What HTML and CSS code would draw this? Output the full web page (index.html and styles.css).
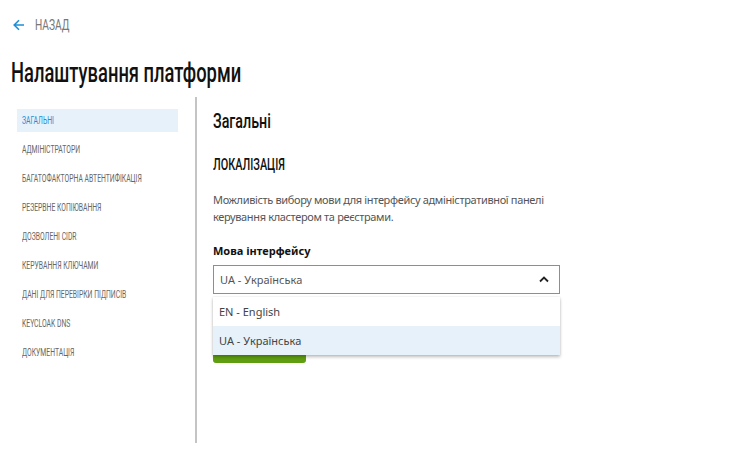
FILE: index.html
```html
<!DOCTYPE html>
<html lang="uk">
<head>
<meta charset="utf-8">
<title>Налаштування платформи</title>
<link rel="stylesheet" href="styles.css">
</head>
<body>
<header class="header">
  <a class="back" href="#">
    <svg class="back-icon" width="12" height="12" viewBox="0 0 12 12"><path d="M11 6H1.5M6 1.2L1.2 6 6 10.8" fill="none" stroke="#1d8fd6" stroke-width="1.6"/></svg>
    <span class="narrow">НАЗАД</span>
  </a>
  <h1 class="title"><span class="narrow">Налаштування платформи</span></h1>
</header>
<div class="main">
  <nav class="sidebar">
    <a class="nav-item active" href="#"><span class="narrow">ЗАГАЛЬНІ</span></a>
    <a class="nav-item" href="#"><span class="narrow">АДМІНІСТРАТОРИ</span></a>
    <a class="nav-item" href="#"><span class="narrow">БАГАТОФАКТОРНА АВТЕНТИФІКАЦІЯ</span></a>
    <a class="nav-item" href="#"><span class="narrow">РЕЗЕРВНЕ КОПІЮВАННЯ</span></a>
    <a class="nav-item" href="#"><span class="narrow">ДОЗВОЛЕНІ CIDR</span></a>
    <a class="nav-item" href="#"><span class="narrow">КЕРУВАННЯ КЛЮЧАМИ</span></a>
    <a class="nav-item" href="#"><span class="narrow">ДАНІ ДЛЯ ПЕРЕВІРКИ ПІДПИСІВ</span></a>
    <a class="nav-item" href="#"><span class="narrow">KEYCLOAK DNS</span></a>
    <a class="nav-item" href="#"><span class="narrow">ДОКУМЕНТАЦІЯ</span></a>
  </nav>
  <section class="content">
    <h2 class="section-title"><span class="narrow">Загальні</span></h2>
    <h3 class="subsection-title"><span class="narrow">ЛОКАЛІЗАЦІЯ</span></h3>
    <p class="description">Можливість вибору мови для інтерфейсу адміністративної панелі керування кластером та реєстрами.</p>
    <label class="field-label">Мова інтерфейсу</label>
    <div class="select-wrap">
      <div class="select">
        <span>UA - Українська</span>
        <svg width="10" height="7" viewBox="0 0 10 7"><path d="M1 5.5L5 1.5 9 5.5" fill="none" stroke="#222" stroke-width="1.8"/></svg>
      </div>
      <ul class="menu">
        <li class="option">EN - English</li>
        <li class="option selected">UA - Українська</li>
      </ul>
    </div>
    <button class="btn">Застосувати</button>
  </section>
</div>
</body>
</html>
```
FILE: styles.css
```css
* { box-sizing: border-box; }
body {
  margin: 0;
  background: #fff;
  font-family: "Noto Sans", "Open Sans", sans-serif;
  color: #222;
}
.narrow {
  display: inline-block;
  white-space: nowrap;
  transform: scaleX(0.68);
  transform-origin: left center;
}
.back, .title, .nav-item, .section-title, .subsection-title {
  font-family: "Roboto", "Noto Sans", sans-serif;
}
.header {
  padding: 18px 11px 0;
}
.back {
  display: flex;
  align-items: center;
  gap: 10px;
  padding-left: 2px;
  text-decoration: none;
  color: #777;
  font-size: 15px;
  height: 14px;
}
.title {
  margin: 26px 0 0;
  font-weight: 500;
  font-size: 27px;
  line-height: 30px;
  color: #111;
}
.main {
  display: flex;
  padding-left: 17px;
  margin-top: 9px;
}
.sidebar {
  width: 161px;
  padding-top: 12px;
  display: flex;
  flex-direction: column;
  gap: 6px;
}
.nav-item {
  display: flex;
  align-items: center;
  height: 23px;
  padding-left: 5px;
  font-size: 10px;
  color: #666;
  text-decoration: none;
}
.nav-item.active {
  background: #e6f1fa;
  color: #1d8fd6;
}
.content {
  margin-left: 17px;
  border-left: 2px solid #c4c4c4;
  padding-left: 16px;
  height: 346px;
  width: 363px;
  padding-top: 12px;
}
.section-title {
  margin: 0;
  font-weight: 500;
  font-size: 21px;
  line-height: 24px;
  color: #111;
}
.subsection-title {
  margin: 23px 0 0;
  font-weight: 500;
  font-size: 16px;
  line-height: 18px;
  color: #111;
}
.description {
  margin: 17px 0 0;
  font-size: 11px;
  line-height: 17px;
  letter-spacing: -0.35px;
  color: #555;
}
.field-label {
  display: block;
  margin-top: 18px;
  font-size: 11px;
  font-weight: 700;
  line-height: 16px;
  color: #111;
}
.select-wrap {
  position: relative;
  margin-top: 6px;
  width: 347px;
}
.select {
  height: 29px;
  border: 1px solid #4aa3d8;
  display: flex;
  align-items: center;
  justify-content: space-between;
  padding: 0 10px 0 6px;
  font-size: 11px;
  color: #555;
}
.menu {
  position: absolute;
  left: 0;
  right: 0;
  top: 32px;
  margin: 0;
  padding: 0;
  list-style: none;
  background: #fff;
  box-shadow: 0 2px 3px rgba(0,0,0,0.25), 0 0 2px rgba(0,0,0,0.1);
  z-index: 2;
}
.option {
  height: 29px;
  display: flex;
  align-items: center;
  padding-left: 6px;
  font-size: 11px;
  color: #444;
}
.option.selected {
  background: #e6f1fa;
}
.btn {
  display: block;
  margin-top: 37px;
  width: 93px;
  height: 32px;
  border: 0;
  border-radius: 3px;
  background: #5f9e10;
  color: #fff;
  font-family: "Noto Sans", sans-serif;
  font-size: 11px;
}
```
